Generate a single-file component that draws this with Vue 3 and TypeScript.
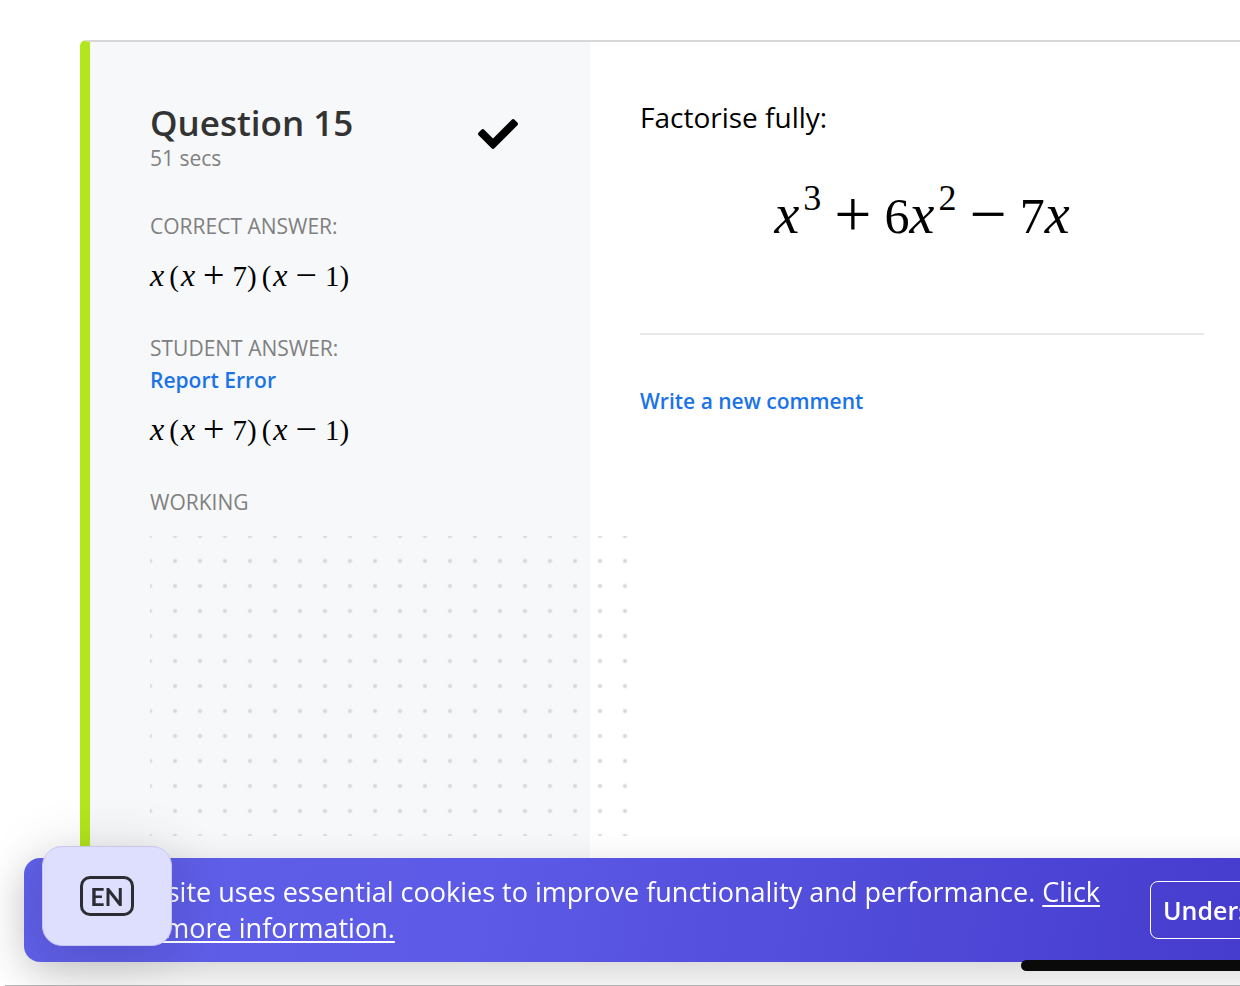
<script setup lang="ts">
type Token = { kind: 'var' | 'num' | 'op' | 'sup' | 'open' | 'close'; text: string }

const answer: Token[] = [
  { kind: 'var', text: 'x' },
  { kind: 'open', text: '(' },
  { kind: 'var', text: 'x' },
  { kind: 'op', text: '+' },
  { kind: 'num', text: '7' },
  { kind: 'close', text: ')' },
  { kind: 'open', text: '(' },
  { kind: 'var', text: 'x' },
  { kind: 'op', text: '−' },
  { kind: 'num', text: '1' },
  { kind: 'close', text: ')' },
]

const expression: Token[] = [
  { kind: 'var', text: 'x' },
  { kind: 'sup', text: '3' },
  { kind: 'op', text: '+' },
  { kind: 'num', text: '6' },
  { kind: 'var', text: 'x' },
  { kind: 'sup', text: '2' },
  { kind: 'op', text: '−' },
  { kind: 'num', text: '7' },
  { kind: 'var', text: 'x' },
]
</script>

<template>
  <div class="page">
    <main class="card">
      <aside class="summary">
        <header class="heading">
          <div>
            <h1>Question 15</h1>
            <p class="time">51 secs</p>
          </div>
          <svg class="tick" viewBox="0 0 512 512" role="img" aria-label="Correct">
            <path d="M173.898 439.404l-166.4-166.4c-9.997-9.997-9.997-26.206 0-36.204l36.203-36.204c9.997-9.998 26.207-9.998 36.204 0L192 312.69 432.095 72.596c9.997-9.997 26.207-9.997 36.204 0l36.203 36.204c9.997 9.997 9.997 26.206 0 36.204l-294.4 294.401c-9.998 9.997-26.207 9.997-36.204-.001z" />
          </svg>
        </header>

        <section class="block">
          <h2>CORRECT ANSWER:</h2>
          <p class="math">
            <span v-for="(t, i) in answer" :key="i" :class="t.kind">{{ t.text }}</span>
          </p>
        </section>

        <section class="block">
          <h2>STUDENT ANSWER:</h2>
          <a class="link" href="#report">Report Error</a>
          <p class="math">
            <span v-for="(t, i) in answer" :key="i" :class="t.kind">{{ t.text }}</span>
          </p>
        </section>

        <section class="block">
          <h2>WORKING</h2>
          <div class="working"></div>
        </section>
      </aside>

      <section class="question">
        <p class="prompt">Factorise fully:</p>
        <p class="math large">
          <span v-for="(t, i) in expression" :key="i" :class="t.kind">{{ t.text }}</span>
        </p>
        <hr />
        <a class="link" href="#comment">Write a new comment</a>
      </section>
    </main>

    <footer class="footer"></footer>

    <div class="cookies" role="region" aria-label="Cookies">
      <p>This website uses essential cookies to improve functionality and performance. <a href="#cookies">Click here for more information.</a></p>
      <button type="button">Understood</button>
    </div>
    <div class="handle"></div>

    <button class="language" type="button" aria-label="Language: EN"><span>EN</span></button>
  </div>
</template>

<style>
body {
  margin: 0;
  background: #fff;
  overflow: hidden;
}
</style>

<style scoped>
.page {
  box-sizing: border-box;
  display: flex;
  flex-direction: column;
  min-height: 100vh;
  padding: 40px 0 0 80px;
  font-family: "Trebuchet MS", "Open Sans", sans-serif;
  color: #000;
}
h1, h2, p {
  margin: 0;
}
.card {
  display: grid;
  grid-template-columns: 500px 1fr;
  border-top: 2px solid #d8d8d8;
  border-left: 10px solid #b3e61c;
  border-top-left-radius: 6px;
}
.summary {
  padding: 61px 72px 50px 60px;
  background: #f7f8fa;
}
.heading {
  display: flex;
  justify-content: space-between;
  align-items: flex-start;
}
h1 {
  font-size: 35px;
  font-weight: 600;
  line-height: 40px;
  color: #333;
}
.time {
  font-size: 21px;
  line-height: 30px;
  color: #808080;
}
.tick {
  width: 40px;
  height: 40px;
  margin-top: 11px;
}
.block {
  margin-top: 40px;
}
.heading + .block {
  margin-top: 37px;
}
h2 {
  font-size: 21px;
  font-weight: 400;
  line-height: 32px;
  color: #808080;
}
.link {
  display: block;
  width: fit-content;
  font-size: 21px;
  font-weight: 600;
  line-height: 32px;
  color: #1a73e8;
  text-decoration: none;
}
.math {
  display: flex;
  align-items: baseline;
  height: 34px;
  margin-top: 16px;
  font-family: "Liberation Serif", serif;
  font-size: 29px;
  line-height: 34px;
}
.math .var {
  font-size: 32px;
  font-style: italic;
}
.math .op {
  align-self: center;
  margin: 0 8px;
  font-size: 38px;
}
.math .open {
  margin: 0 2px 0 5px;
}
.working {
  width: 480px;
  height: 300px;
  margin-top: 18px;
  background-image: radial-gradient(circle at 12px 12px, #d8d8da 1px, rgba(216, 216, 218, 0) 3px);
  background-size: 25px 25px;
  background-position: -12px -12px;
}
.question {
  padding: 56px 36px 50px 50px;
}
.prompt {
  font-size: 28px;
  line-height: 38px;
}
.math.large {
  justify-content: center;
  height: 66px;
  margin-top: 45px;
  font-size: 50px;
  line-height: 66px;
}
.large .var {
  font-size: 56px;
}
.large .op {
  margin: 0 13px;
  font-size: 66px;
}
.large .sup {
  align-self: flex-start;
  margin-left: 4px;
  font-size: 36px;
  line-height: 34px;
}
hr {
  height: 2px;
  margin: 86px 0 50px;
  border: 0;
  background: #e8e8e8;
}
.footer {
  margin: auto 0 0 -75px;
  border-top: 1px solid #bcbcbc;
}
.cookies {
  position: fixed;
  left: 24px;
  right: -100px;
  bottom: 24px;
  box-sizing: border-box;
  display: flex;
  align-items: center;
  justify-content: space-between;
  padding: 16px 32px;
  border-radius: 16px;
  background: linear-gradient(100deg, #6060e9, #5c5ae6 35%, #4338ca);
  box-shadow: 0 12px 40px rgba(0, 0, 0, 0.18);
  color: #fff;
}
.cookies p {
  flex: 1;
  max-width: 1062px;
  font-size: 27px;
  line-height: 36px;
}
.cookies a {
  color: inherit;
  text-decoration-thickness: 2px;
  text-underline-offset: 3px;
}
.cookies button {
  flex: none;
  width: 158px;
  height: 58px;
  padding: 0 12px;
  border: 1px solid #fff;
  border-radius: 8px;
  background: transparent;
  color: #fff;
  font: inherit;
  font-size: 25px;
  font-weight: 600;
}
.handle {
  position: fixed;
  left: 1021px;
  right: -100px;
  bottom: 15px;
  height: 11px;
  border-radius: 6px;
  background: #0a0a0a;
}
.language {
  position: fixed;
  left: 42px;
  bottom: 40px;
  display: grid;
  place-items: center;
  width: 130px;
  height: 100px;
  padding: 0;
  border: 1px solid #c9c6f0;
  border-radius: 20px;
  background: #dedeff;
  box-shadow: 0 8px 60px rgba(0, 0, 0, 0.16);
}
.language span {
  box-sizing: border-box;
  width: 54px;
  border: 3px solid #2b2d33;
  border-radius: 10px;
  color: #2b2d33;
  font: 700 25px/34px Lato, sans-serif;
}
</style>
